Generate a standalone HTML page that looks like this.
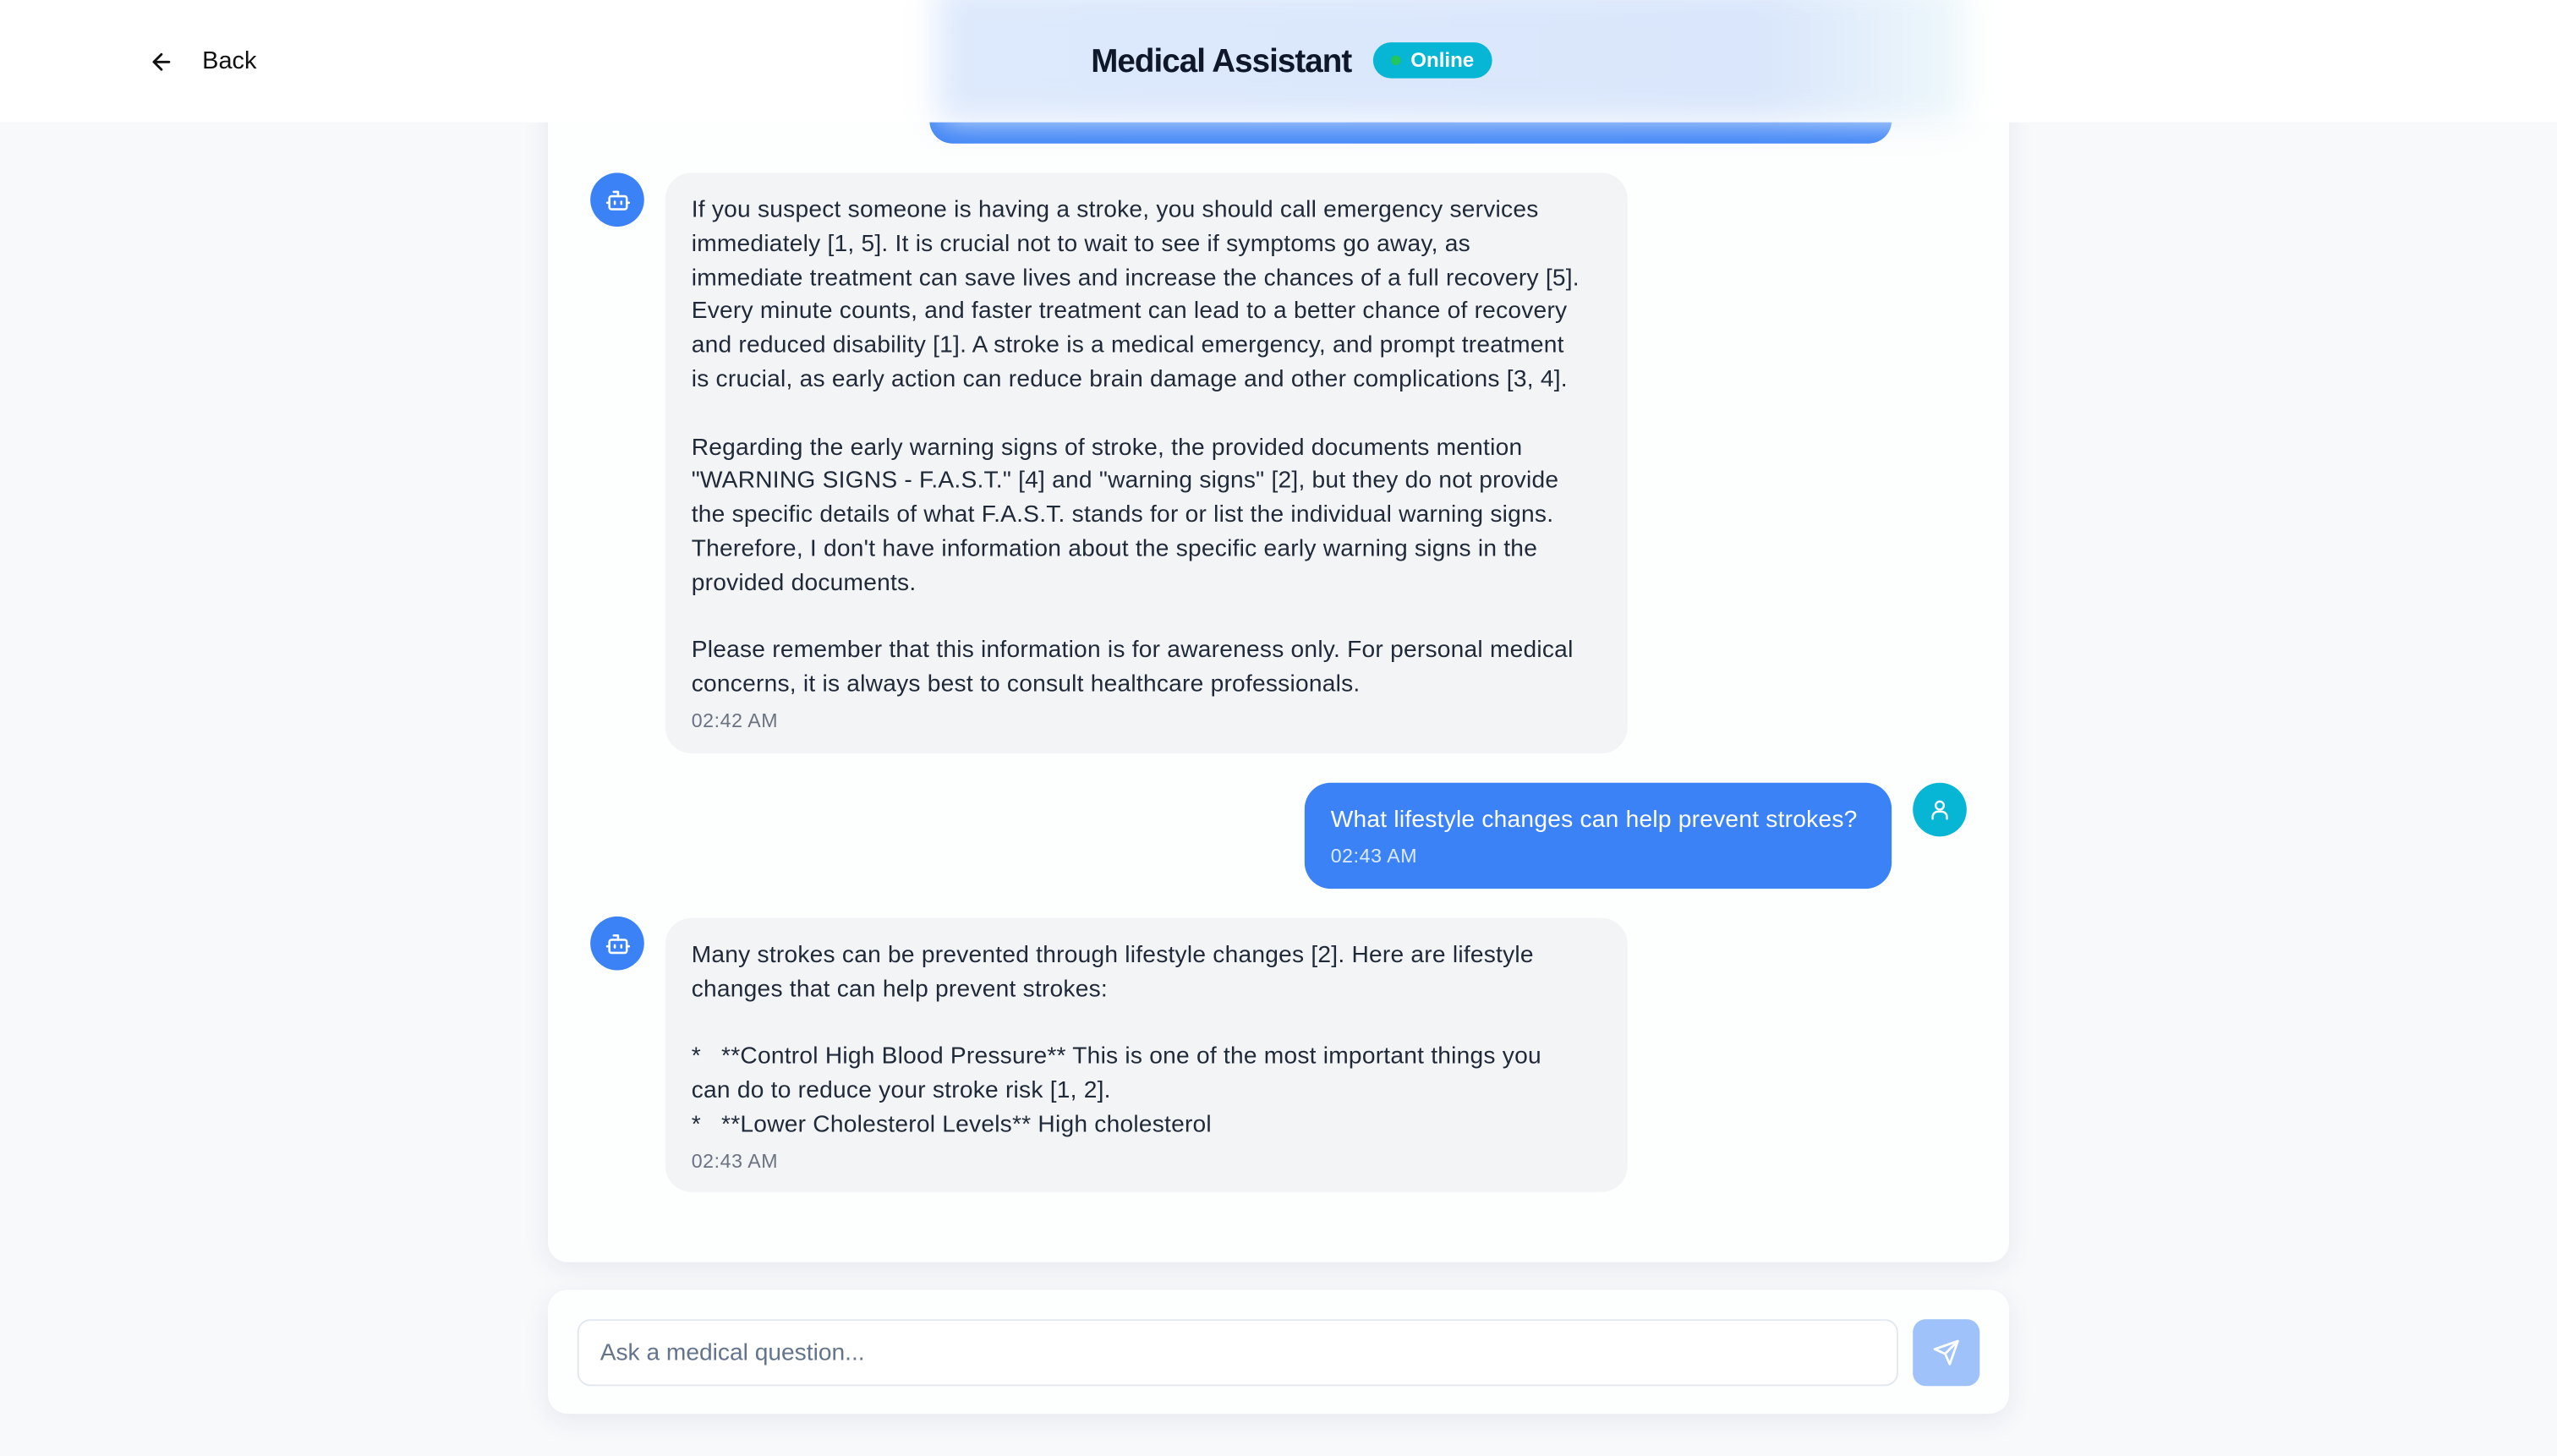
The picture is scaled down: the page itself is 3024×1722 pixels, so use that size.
<!DOCTYPE html>
<html><head><meta charset="utf-8"><style>
html,body{margin:0;padding:0;width:3024px;height:1722px;overflow:hidden;background:#f8f9fb;font-family:"Liberation Sans",sans-serif}
#w{position:absolute;left:0;top:0;width:1568px;height:893px;transform:scale(1.92857);transform-origin:0 0}
.abs{position:absolute}
.card{background:#fdfefe;border-radius:12px;box-shadow:0 4px 16px rgba(30,40,100,.08)}
.bub{background:#f3f4f6;border-radius:16px;color:#1f2937;font-size:14.6px;line-height:20.8px;padding:13px 16px 12px;box-sizing:border-box;white-space:nowrap;letter-spacing:0.12px}
.ts{font-size:12px;color:#6b7280;line-height:18px;margin-top:2px;letter-spacing:0.3px}
.av{width:33px;height:33px;border-radius:50%;display:flex;align-items:center;justify-content:center}
</style></head><body><div id="w">
<div class="abs card" style="left:336px;top:40px;width:896px;height:734px"></div>
<div class="abs" style="left:570px;top:40px;width:590px;height:48px;background:#3b82f6;border-radius:0 0 14px 14px"></div>
<div class="abs" style="left:0;top:0;width:1568px;height:75px;background:#fff"></div>
<div class="abs" style="left:575px;top:-10px;width:630px;height:85px;background:linear-gradient(90deg,#dde9fc,#d9e6fb 80%,#eef8fb);filter:blur(10px)"></div>
<div class="abs" style="left:0;top:75px;width:1568px;height:12px;background:transparent"></div>
<svg class="abs" style="left:91px;top:30px" width="16" height="16" viewBox="0 0 24 24" fill="none" stroke="#111" stroke-width="2.2" stroke-linecap="round" stroke-linejoin="round"><path d="M19 12H5M12 19l-7-7 7-7"/></svg>
<div class="abs" style="left:124px;top:29px;font-size:15px;font-weight:500;color:#111">Back</div>
<div class="abs" style="left:669px;top:27px;font-size:20px;font-weight:bold;color:#0f172a;letter-spacing:-0.5px">Medical Assistant</div>
<div class="abs" style="left:842px;top:26px;width:73px;height:22px;border-radius:11px;background:#06b6d4;color:#fff;font-size:12.5px;font-weight:bold;line-height:23px"><span style="position:absolute;left:11px;top:8px;width:6px;height:6px;border-radius:50%;background:#22c55e"></span><span style="position:absolute;left:23px">Online</span></div>

<div class="abs av" style="left:362px;top:106px;background:#3b82f6"><svg width="16" height="16" viewBox="0 0 24 24" fill="none" stroke="#fff" stroke-width="2" stroke-linecap="round" stroke-linejoin="round"><path d="M12 8V4H8"/><rect x="4" y="8" width="16" height="12" rx="2"/><path d="M2 14h2M20 14h2M15 13v2M9 13v2"/></svg></div>
<div class="abs bub" style="left:408px;top:106px;width:590px;height:356px">If you suspect someone is having a stroke, you should call emergency services<br>immediately [1, 5]. It is crucial not to wait to see if symptoms go away, as<br>immediate treatment can save lives and increase the chances of a full recovery [5].<br>Every minute counts, and faster treatment can lead to a better chance of recovery<br>and reduced disability [1]. A stroke is a medical emergency, and prompt treatment<br>is crucial, as early action can reduce brain damage and other complications [3, 4].<br><br>Regarding the early warning signs of stroke, the provided documents mention<br>"WARNING SIGNS - F.A.S.T." [4] and "warning signs" [2], but they do not provide<br>the specific details of what F.A.S.T. stands for or list the individual warning signs.<br>Therefore, I don't have information about the specific early warning signs in the<br>provided documents.<br><br>Please remember that this information is for awareness only. For personal medical<br>concerns, it is always best to consult healthcare professionals.<div class="ts">02:42 AM</div></div>

<div class="abs bub" style="left:800px;top:480px;width:360px;height:65px;background:#3b82f6;color:#fff">What lifestyle changes can help prevent strokes?<div class="ts" style="color:#dbeafe">02:43 AM</div></div>
<div class="abs av" style="left:1173px;top:480px;background:#06b6d4"><svg width="15" height="15" viewBox="0 0 24 24" fill="none" stroke="#fff" stroke-width="2" stroke-linecap="round"><circle cx="12" cy="8" r="4"/><path d="M5 21v-2a5 5 0 0 1 5-5h4a5 5 0 0 1 5 5v2"/></svg></div>

<div class="abs av" style="left:362px;top:562px;background:#3b82f6"><svg width="16" height="16" viewBox="0 0 24 24" fill="none" stroke="#fff" stroke-width="2" stroke-linecap="round" stroke-linejoin="round"><path d="M12 8V4H8"/><rect x="4" y="8" width="16" height="12" rx="2"/><path d="M2 14h2M20 14h2M15 13v2M9 13v2"/></svg></div>
<div class="abs bub" style="left:408px;top:563px;width:590px;height:168px">Many strokes can be prevented through lifestyle changes [2]. Here are lifestyle<br>changes that can help prevent strokes:<br><br>*&nbsp;&nbsp; **Control High Blood Pressure** This is one of the most important things you<br>can do to reduce your stroke risk [1, 2].<br>*&nbsp;&nbsp; **Lower Cholesterol Levels** High cholesterol<div class="ts">02:43 AM</div></div>

<div class="abs card" style="left:336px;top:791px;width:896px;height:76px"></div>
<div class="abs" style="left:354px;top:809px;width:810px;height:41px;box-sizing:border-box;border:1px solid #e2e8f0;border-radius:8px;background:#fff;font-size:14.6px;color:#64748b;line-height:41px;padding-left:13px">Ask a medical question...</div>
<div class="abs" style="left:1173px;top:809px;width:41px;height:41px;border-radius:8px;background:#9ec2f9;display:flex;align-items:center;justify-content:center"><svg width="17" height="17" viewBox="0 0 24 24" fill="none" stroke="#fff" stroke-width="2" stroke-linecap="round" stroke-linejoin="round"><path d="M22 2 11 13M22 2l-7 20-4-9-9-4 20-7z"/></svg></div>
</div></body></html>
